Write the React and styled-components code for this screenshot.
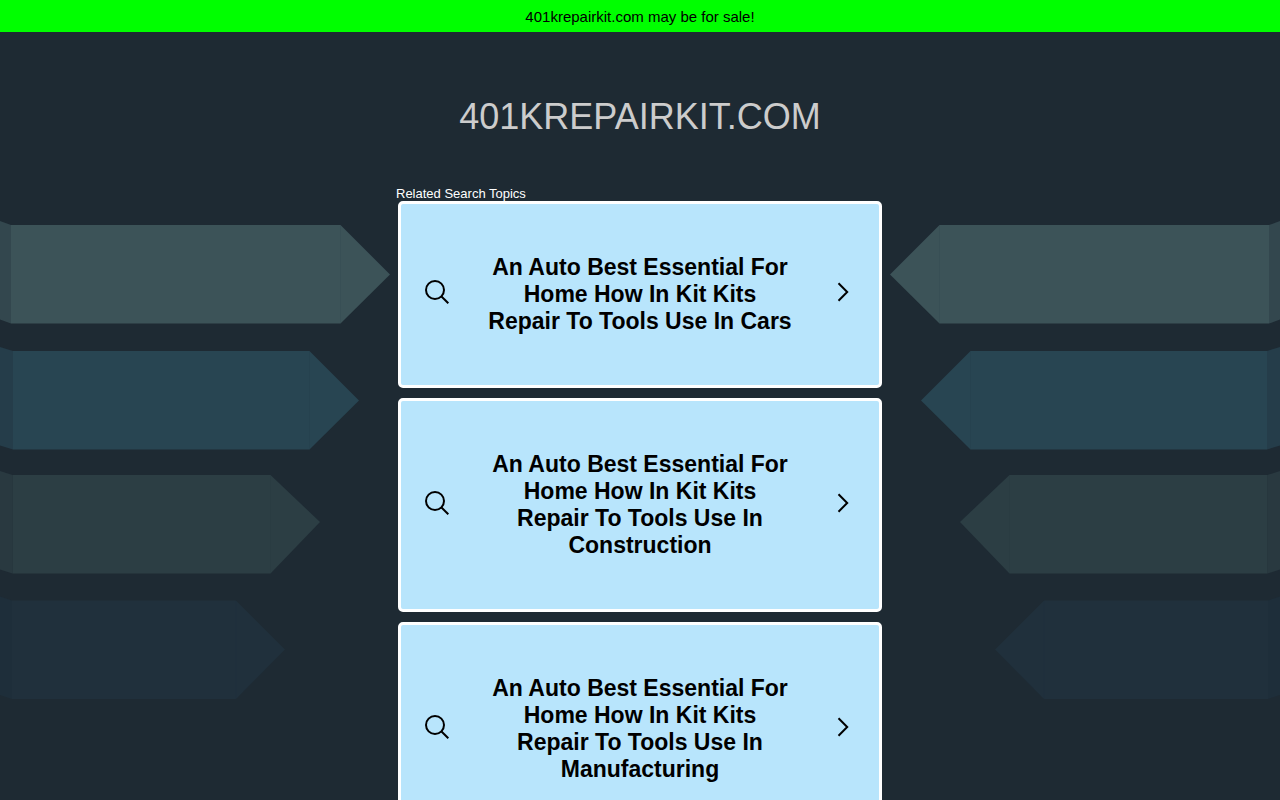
import React from 'react';
import styled, { createGlobalStyle } from 'styled-components';

const GlobalStyle = createGlobalStyle`
    body {
        margin: 0;
        background-color: #1e2a33;
        font-family: Arial, "Liberation Sans", sans-serif;
    }
`;

const SaleBanner = styled.a`
    display: block;
    padding: 9px 8px 7px;
    background-color: #00ff00;
    color: #000000;
    font-size: 15px;
    line-height: 16px;
    text-align: center;
    text-decoration: none;
`;

const DomainTitle = styled.h1`
    margin: 0;
    padding: 65px 16px 49px;
    color: #cccccc;
    font-size: 36px;
    font-weight: normal;
    line-height: 40px;
    text-align: center;
    text-transform: uppercase;
`;

const Columns = styled.main`
    display: grid;
    grid-template-columns: minmax(0, 1fr) minmax(0, 488px) minmax(0, 1fr);
`;

const Side = styled.div`
    display: flex;
    align-items: flex-start;
    justify-content: flex-end;
    flex-direction: ${(props) => (props.$right ? 'row' : 'row-reverse')};
    padding-top: 34px;
    overflow: hidden;

    svg {
        flex: none;
    }
`;

const TopicsLabel = styled.h2`
    margin: 0;
    color: #ffffff;
    font-size: 13px;
    font-weight: normal;
    line-height: 15px;
`;

const TopicList = styled.ul`
    display: flex;
    flex-direction: column;
    gap: 10px;
    margin: 0;
    padding: 0 2px 10px;
    list-style: none;
`;

const TopicLink = styled.a`
    display: flex;
    align-items: center;
    padding: 50px 24px;
    border: 3px solid #ffffff;
    border-radius: 5px;
    background-color: #b8e5fc;
    color: #000000;
    text-decoration: none;

    svg {
        flex: none;
        margin-bottom: 5px;
    }
`;

const TopicText = styled.span`
    flex: 1;
    padding: 0 38px;
    font-size: 23px;
    font-weight: bold;
    line-height: 27px;
    text-align: center;
`;

const SearchIcon = () => (
    <svg width="24" height="24" viewBox="0 0 24 24" fill="none" stroke="currentColor" strokeWidth="2" aria-hidden="true">
        <circle cx="10" cy="10" r="9" />
        <path d="M16.5 16.5 L23.3 23.3" />
    </svg>
);

const ChevronIcon = () => (
    <svg width="24" height="24" viewBox="0 0 24 24" fill="none" stroke="currentColor" strokeWidth="2" aria-hidden="true">
        <path d="M7.5 3.3 L16.2 12 L7.5 20.7" />
    </svg>
);

const arrows = [
    { top: 5, fold: 11, end: 340.5, tip: 390, mid: 54.5, front: '#3c5358', back: '#33474e' },
    { top: 131, fold: 13, end: 309.5, tip: 359, mid: 180.5, front: '#284552', back: '#253d4a' },
    { top: 255, fold: 12.5, end: 270.5, tip: 320, mid: 302, front: '#2c3e44', back: '#293940' },
    { top: 380.5, fold: 12, end: 236, tip: 285, mid: 429.5, front: '#20303c', back: '#1e2e3a' },
];

const Arrows = ({ flip }) => (
    <svg width="390" height="480" viewBox="0 0 390 480" aria-hidden="true">
        <g transform={flip ? 'translate(390 0) scale(-1 1)' : undefined}>
            {arrows.map((a) => (
                <g key={a.top}>
                    <path fill={a.back} d={`M0 ${a.top - 4} L${a.fold} ${a.top} V${a.top + 98.5} L0 ${a.top + 94.5} Z`} />
                    <path fill={a.front} d={`M${a.fold} ${a.top} H${a.end} L${a.tip} ${a.mid} L${a.end} ${a.top + 98.5} H${a.fold} Z`} />
                    <path stroke={a.back} strokeOpacity="0.3" d={`M${a.end} ${a.top} V${a.top + 98}`} />
                </g>
            ))}
        </g>
    </svg>
);

const topics = [
    'An Auto Best Essential For Home How In Kit Kits Repair To Tools Use In Cars',
    'An Auto Best Essential For Home How In Kit Kits Repair To Tools Use In Construction',
    'An Auto Best Essential For Home How In Kit Kits Repair To Tools Use In Manufacturing',
];

const Topic = (props) => (
    <li>
        <TopicLink href="#">
            <SearchIcon />
            <TopicText>{props.title}</TopicText>
            <ChevronIcon />
        </TopicLink>
    </li>
);

const App = () => {
    return (
        <>
            <GlobalStyle />
            <SaleBanner href="#">401krepairkit.com may be for sale!</SaleBanner>
            <DomainTitle>401krepairkit.com</DomainTitle>
            <Columns>
                <Side>
                    <Arrows />
                </Side>
                <section>
                    <TopicsLabel>Related Search Topics</TopicsLabel>
                    <TopicList>
                        {topics.map((title) => (
                            <Topic key={title} title={title} />
                        ))}
                    </TopicList>
                </section>
                <Side $right>
                    <Arrows flip />
                </Side>
            </Columns>
        </>
    );
};

export default App;
